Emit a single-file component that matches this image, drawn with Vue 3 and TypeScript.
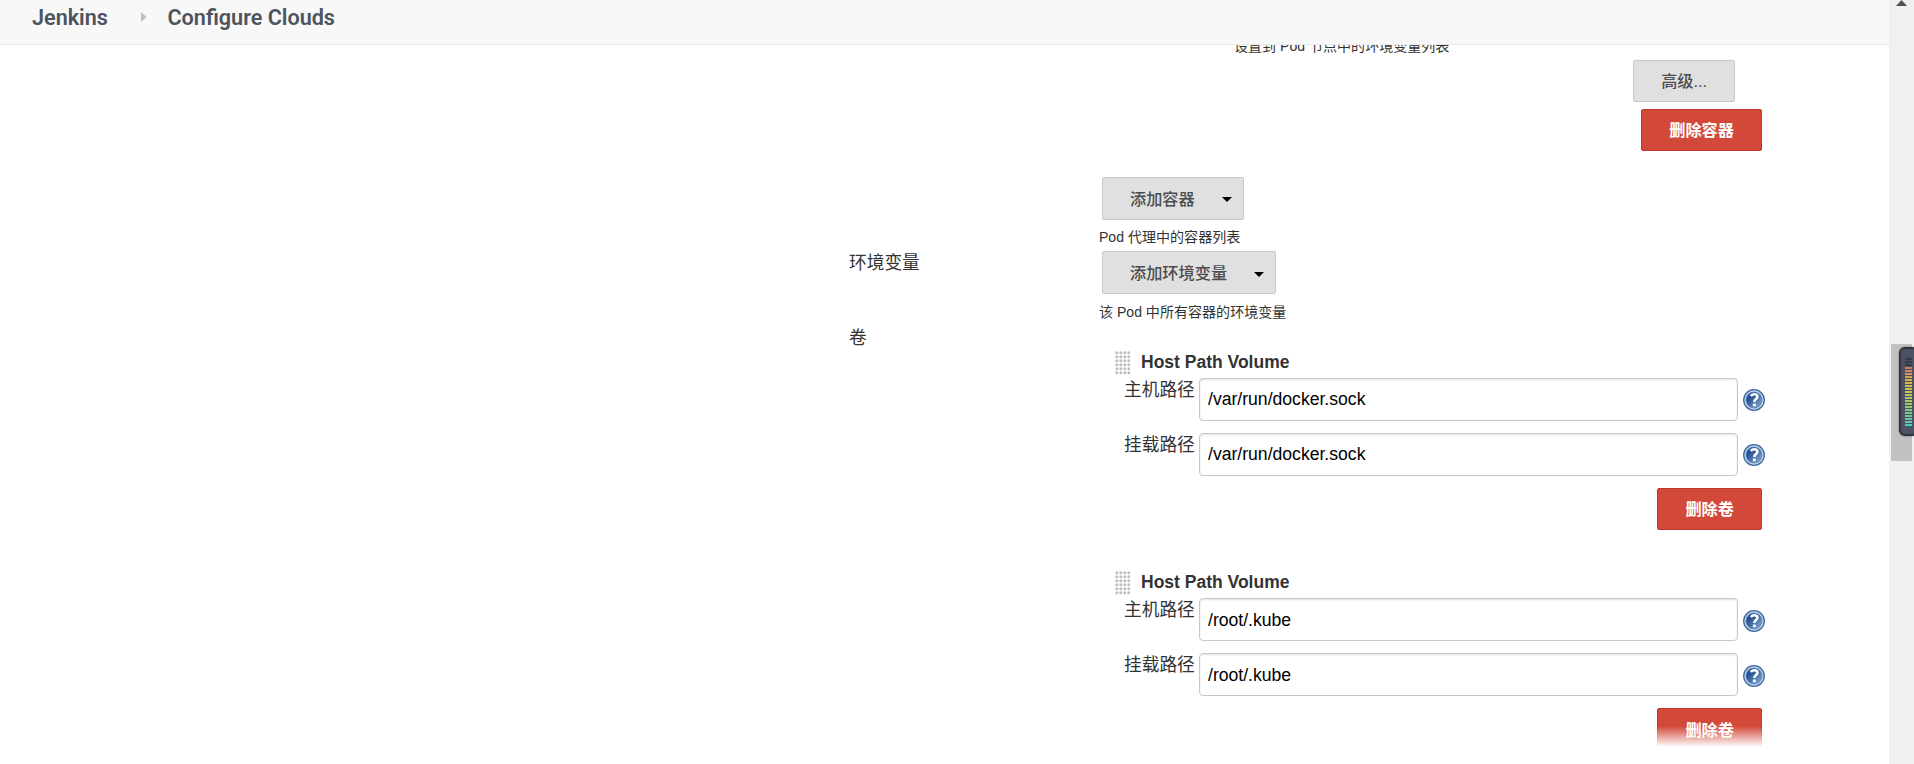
<script setup lang="ts">
interface Field {
  label: string
  value: string
}

interface Volume {
  title: string
  fields: Field[]
}

const hostPath = (path: string): Volume => ({
  title: 'Host Path Volume',
  fields: [
    { label: '主机路径', value: path },
    { label: '挂载路径', value: path },
  ],
})

const volumes: Volume[] = [hostPath('/var/run/docker.sock'), hostPath('/root/.kube')]

const levels: string[] = [
  '#343a48', '#343a48', '#343a48', '#d8755c', '#dc8457', '#dc9353', '#daa04e', '#d9ad49',
  '#d8b646', '#d4bf45', '#cfc34a', '#c6c64f', '#bbc757', '#afc85f', '#a4c967', '#98c970',
  '#8cc978', '#80c981', '#75c98a', '#69c993', '#5fca9d', '#56cba7', '#4fccb1',
]
</script>

<template>
  <div class="screen">
    <div class="page">
      <header class="breadcrumbs">
        <span class="crumb first">Jenkins</span>
        <svg class="chevron" width="6" height="10" viewBox="0 0 6 10"><path d="M0 0L5.5 5L0 10Z" fill="#bfbfbf" /></svg>
        <span class="crumb">Configure Clouds</span>
      </header>

      <main class="form">
        <div class="help clipped"><span>设置到 Pod 节点中的环境变量列表</span></div>
        <div class="line advanced"><button class="btn">高级...</button></div>
        <div class="line remove-container"><button class="btn danger">删除容器</button></div>

        <div class="row containers">
          <div class="label"></div>
          <div class="setting">
            <button class="btn menu">添加容器<i class="caret"></i></button>
            <p class="help">Pod 代理中的容器列表</p>
          </div>
        </div>
        <div class="row variables">
          <div class="label">环境变量</div>
          <div class="setting">
            <button class="btn menu">添加环境变量<i class="caret"></i></button>
            <p class="help">该 Pod 中所有容器的环境变量</p>
          </div>
        </div>
        <div class="row">
          <div class="label volumes-label">卷</div>
          <div class="setting volumes">
            <section v-for="(volume, v) in volumes" :key="v" class="volume">
              <div class="volume-head">
                <span class="grip"></span>
                <b>{{ volume.title }}</b>
              </div>
              <div v-for="field in volume.fields" :key="field.label" class="field">
                <label>{{ field.label }}</label>
                <input type="text" :value="field.value" />
                <svg class="hint" width="22" height="22" viewBox="0 0 22 22">
                  <defs>
                    <linearGradient id="ball" x1="0" y1="0" x2="1" y2="1">
                      <stop offset="0.3" stop-color="#28528f" />
                      <stop offset="0.95" stop-color="#86a9d4" />
                    </linearGradient>
                  </defs>
                  <circle cx="11" cy="11" r="10.3" fill="#c3d5eb" stroke="#3f679f" stroke-width="1.3" />
                  <circle cx="11" cy="11" r="8" fill="url(#ball)" stroke="#5c82b6" stroke-width="0.7" />
                  <path d="M7.8 7.1C8.8 5.8 10 5.3 11.3 5.3C13.3 5.3 14.4 6.3 14.4 7.8C14.4 10.2 11.4 10 11.3 13" fill="none" stroke="#fff" stroke-width="2.5" />
                  <rect x="9.9" y="14.4" width="2.9" height="2.9" rx="0.4" fill="#fff" />
                </svg>
              </div>
              <div class="volume-foot"><button class="btn danger">删除卷</button></div>
            </section>
          </div>
        </div>
      </main>
      <div class="fade"></div>
    </div>

    <aside class="scrollbar">
      <svg class="arrow" width="11" height="6" viewBox="0 0 11 6"><path d="M5.5 0L11 6H0Z" fill="#505050" /></svg>
      <div class="thumb"></div>
      <div class="meter"><i v-for="(color, n) in levels" :key="n" :style="{ background: color }"></i></div>
    </aside>
  </div>
</template>

<style scoped>
.screen {
  display: flex;
  width: 1914px;
  height: 764px;
  overflow: hidden;
  background: #fff;
  color: #333;
  font-family: "Liberation Sans", "Noto Sans CJK SC", sans-serif;
}
.screen * { box-sizing: border-box; }
.page {
  position: relative;
  width: 1889px;
  height: 764px;
  overflow: hidden;
}
.breadcrumbs {
  display: flex;
  height: 45px;
  padding-left: 32px;
  background: #f8f8f8;
  border-bottom: 1px solid #e5eceb;
}
.crumb {
  color: #4d545d;
  font: 600 21.6px/36px Roboto, sans-serif;
}
.crumb.first { width: 109px; }
.chevron { margin: 12px 20.5px 0 0; flex: none; }

.form { padding-left: 849px; }
.help {
  margin: 0;
  font-size: 14.05px;
  line-height: 18px;
  white-space: nowrap;
}
.clipped {
  display: flex;
  align-items: flex-end;
  height: 8px;
  margin-left: 385px;
  overflow: hidden;
}
.clipped span {
  height: 16px;
}
.line {
  display: flex;
  justify-content: flex-end;
}
.advanced { padding: 7px 154px 0 0; }
.remove-container { padding: 7px 127px 0 0; }
.btn {
  display: flex;
  align-items: center;
  height: 42px;
  padding: 0 27px;
  border: 1px solid #c8c8c8;
  border-radius: 2px;
  background: #e0e0e0;
  color: #4d4d4f;
  font: 500 16.2px/24px "Liberation Sans", "Noto Sans CJK SC", sans-serif;
  white-space: nowrap;
}
.danger {
  border-color: #b93a2b;
  background: #d24939;
  color: #fff;
  font-weight: 600;
}
.menu {
  height: 43px;
  margin-left: 3px;
  padding-right: 11px;
}
.caret {
  margin: 2px 0 0 27px;
  border: 5px solid transparent;
  border-top-color: #000;
  border-bottom: 0;
}
.row { display: flex; }
.label {
  width: 250px;
  font-size: 17.7px;
  line-height: 24px;
}
.volumes-label { padding-top: 1px; }
.containers { height: 74px; margin-top: 26px; }
.variables { height: 74px; }
.variables .btn { padding-top: 1px; }
.containers .help { margin-top: 8px; }
.variables .help { margin-top: 9px; }
.setting { width: 790px; }

.volumes { padding: 25px 0 0 16px; }
.volume { height: 220px; }
.volume-head {
  display: flex;
  height: 28px;
}
.grip {
  width: 15px;
  height: 24px;
  margin: 1px 11px 0 0;
  background-image: radial-gradient(circle at 1.8px 1.8px, #bbb 0.8px, transparent 2px);
  background-size: 4px 4px;
}
.volume-head b {
  font-size: 17.5px;
  line-height: 24px;
}
.field {
  display: flex;
  height: 55px;
  padding-left: 9px;
}
.field label {
  width: 75px;
  font-size: 17.7px;
  line-height: 24px;
  white-space: nowrap;
}
.field input {
  width: 539px;
  height: 43px;
  padding: 0 8px;
  border: 1px solid #c8c8c8;
  border-radius: 4px;
  background: #fff;
  box-shadow: inset 0 1px 2px rgba(0, 0, 0, 0.12);
  color: #000;
  font: 17.6px "Liberation Sans", sans-serif;
}
.hint {
  flex: none;
  margin: 11px 0 0 5px;
}
.volume + .volume .hint { margin-top: 12px; }
.volume + .volume input { padding-top: 2px; }
.volume-foot {
  display: flex;
  justify-content: flex-end;
  width: 659px;
  padding-right: 12px;
}
.volume + .volume .btn { padding-top: 2px; }
.fade {
  position: absolute;
  left: 0;
  right: 0;
  bottom: 0;
  height: 38px;
  background: linear-gradient(rgba(255, 255, 255, 0), #fff 21px);
}

.scrollbar {
  position: relative;
  width: 25px;
  height: 764px;
  background: #f0f0f0;
}
.arrow {
  display: block;
  margin-left: 7px;
}
.thumb {
  width: 21px;
  height: 117px;
  margin: 338px 0 0 2px;
  background: #c1c1c1;
}
.meter {
  position: absolute;
  top: 347px;
  right: -4px;
  width: 19px;
  height: 89px;
  padding: 9px 6px 0 4px;
  border: 2px solid #30343f;
  border-right: 0;
  border-radius: 6px;
  background: #4c5262;
  box-shadow: 0 0 2px rgba(0, 0, 0, 0.5);
}
.meter i {
  display: block;
  height: 2px;
  margin-bottom: 1px;
}
</style>
